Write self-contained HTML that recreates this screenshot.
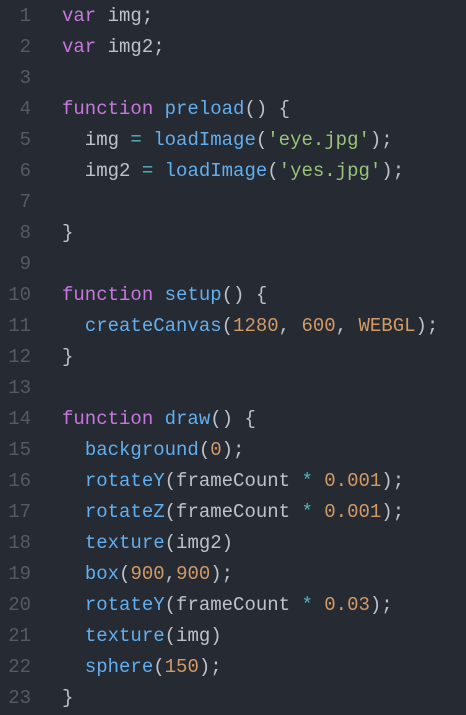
<!DOCTYPE html>
<html><head><style>
html,body{margin:0;padding:0;background:#262a33;width:466px;height:715px;overflow:hidden}
pre{margin:0;position:absolute;left:0;top:1px;font-family:"Liberation Mono",monospace;font-size:19px;line-height:31px;color:#bcc2cc}
.n{display:inline-block;width:31px;text-align:right;color:#555a66;margin-right:31px}
.k{color:#c678dd}.f{color:#61afef}.s{color:#98c379}.d{color:#d19a66}.o{color:#56b6c2}
</style></head><body><pre>
<span class="n">1</span><span class="k">var</span> img;
<span class="n">2</span><span class="k">var</span> img2;
<span class="n">3</span>
<span class="n">4</span><span class="k">function</span> <span class="f">preload</span>() {
<span class="n">5</span>  img <span class="o">=</span> <span class="f">loadImage</span>(<span class="s">'eye.jpg'</span>);
<span class="n">6</span>  img2 <span class="o">=</span> <span class="f">loadImage</span>(<span class="s">'yes.jpg'</span>);
<span class="n">7</span>
<span class="n">8</span>}
<span class="n">9</span>
<span class="n">10</span><span class="k">function</span> <span class="f">setup</span>() {
<span class="n">11</span>  <span class="f">createCanvas</span>(<span class="d">1280</span>, <span class="d">600</span>, <span class="d">WEBGL</span>);
<span class="n">12</span>}
<span class="n">13</span>
<span class="n">14</span><span class="k">function</span> <span class="f">draw</span>() {
<span class="n">15</span>  <span class="f">background</span>(<span class="d">0</span>);
<span class="n">16</span>  <span class="f">rotateY</span>(frameCount <span class="o">*</span> <span class="d">0.001</span>);
<span class="n">17</span>  <span class="f">rotateZ</span>(frameCount <span class="o">*</span> <span class="d">0.001</span>);
<span class="n">18</span>  <span class="f">texture</span>(img2)
<span class="n">19</span>  <span class="f">box</span>(<span class="d">900</span>,<span class="d">900</span>);
<span class="n">20</span>  <span class="f">rotateY</span>(frameCount <span class="o">*</span> <span class="d">0.03</span>);
<span class="n">21</span>  <span class="f">texture</span>(img)
<span class="n">22</span>  <span class="f">sphere</span>(<span class="d">150</span>);
<span class="n">23</span>}
</pre></body></html>
